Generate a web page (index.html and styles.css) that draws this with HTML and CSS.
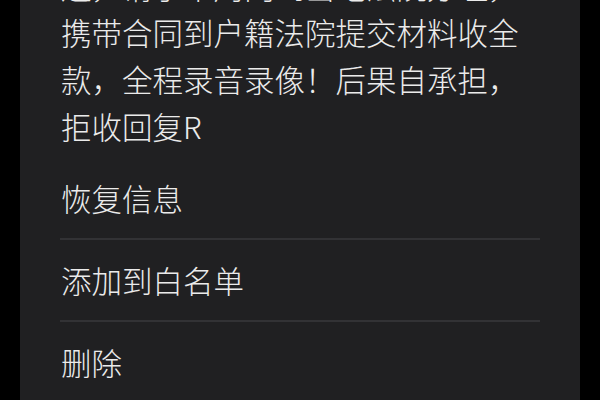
FILE: index.html
```html
<!DOCTYPE html>
<html lang="zh-CN">
<head>
<meta charset="utf-8">
<link rel="stylesheet" href="styles.css">
</head>
<body>
<div class="panel">
  <div class="message">
    <div>还，请于本周内到当地法院办理，</div>
    <div>携带合同到户籍法院提交材料收全</div>
    <div>款，全程录音录像！后果自承担，</div>
    <div>拒收回复R</div>
  </div>
  <ul class="menu">
    <li class="item">恢复信息</li>
    <li class="item">添加到白名单</li>
    <li class="item">删除</li>
  </ul>
</div>
</body>
</html>
```

FILE: styles.css
```css
html, body {
  margin: 0;
  padding: 0;
  background: #000;
  height: 400px;
  overflow: hidden;
}
.panel {
  margin: 0 20px;
  height: 400px;
  background: #202022;
  padding: 0 40px 0 41px;
  overflow: hidden;
  font-family: "Noto Sans CJK SC", "Noto Sans", sans-serif;
  font-size: 30.5px;
  font-weight: 300;
  color: #ebebeb;
}
.message {
  margin-top: -37px;
  line-height: 47px;
  white-space: nowrap;
}
.message div:nth-child(2) {
  margin-top: -1px;
}
.menu {
  list-style: none;
  margin: 8px 0 0 -1px;
  padding: 0;
}
.item {
  line-height: 80px;
  padding-left: 1px;
  border-bottom: 2px solid #323235;
}
.item:last-child {
  border-bottom: none;
}
```
